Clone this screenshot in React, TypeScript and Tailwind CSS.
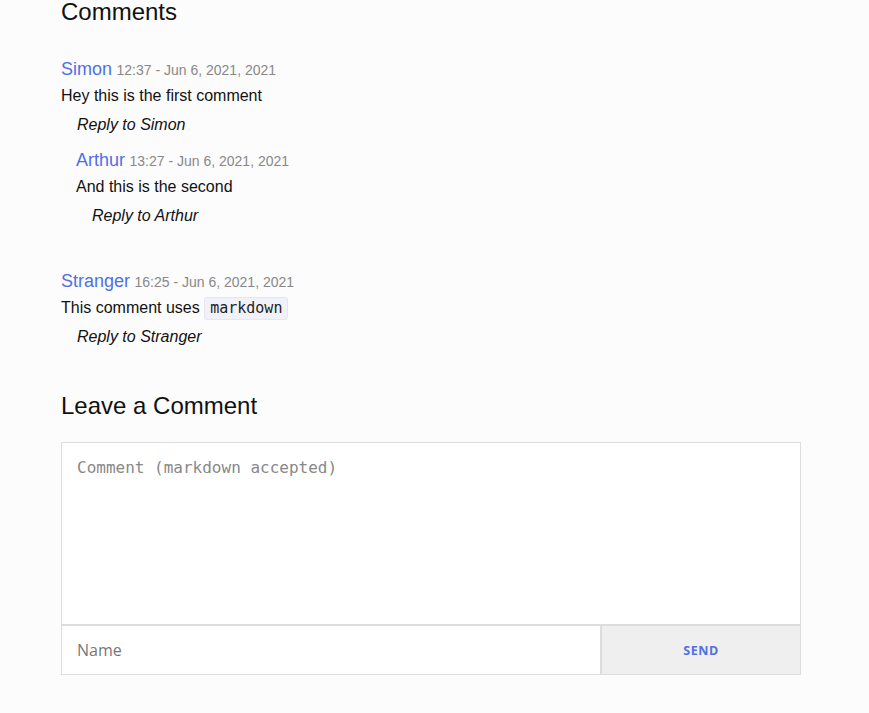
import React from 'react';

type Comment = {
  author: string;
  time: string;
  body: React.ReactNode;
  replies?: Comment[];
};

const comments: Comment[] = [
  {
    author: 'Simon',
    time: '12:37 - Jun 6, 2021, 2021',
    body: 'Hey this is the first comment',
    replies: [
      {
        author: 'Arthur',
        time: '13:27 - Jun 6, 2021, 2021',
        body: 'And this is the second',
      },
    ],
  },
  {
    author: 'Stranger',
    time: '16:25 - Jun 6, 2021, 2021',
    body: (
      <>
        This comment uses{' '}
        <code className="inline-block rounded-[3px] border border-[#e6e6f2] bg-[#f1f1fa] px-[5px] font-['DejaVu_Sans_Mono',monospace] text-[15px] leading-[21px] text-[#222]">
          markdown
        </code>
      </>
    ),
  },
];

function CommentItem({ comment }: { comment: Comment }) {
  return (
    <div>
      <div className="h-[27px] leading-[24px]">
        <span className="text-[18px] text-[#4f70e6]">{comment.author}</span>{' '}
        <span className="text-[14px] text-[#888]">{comment.time}</span>
      </div>
      <p className="text-[16px] leading-[24px] text-[#111]">{comment.body}</p>
      <div className="mt-[5px] pl-4 text-[16px] italic leading-[24px] text-[#111]">
        Reply to {comment.author}
      </div>
      {comment.replies && (
        <div className="mt-[11px] pl-[15px]">
          {comment.replies.map((r) => (
            <CommentItem key={r.author} comment={r} />
          ))}
        </div>
      )}
    </div>
  );
}

export default function App() {
  return (
    <div className="min-h-[713px] bg-[#fcfcfc] font-['Liberation_Sans',Arial,sans-serif]">
      <div className="ml-[61px] w-[740px]">
        <h2 className="text-[24px] leading-none text-[#111]">Comments</h2>

        <div className="mt-[33px] flex flex-col gap-[41px]">
          {comments.map((c) => (
            <CommentItem key={c.author} comment={c} />
          ))}
        </div>

        <h2 className="mt-[45px] text-[24px] leading-none text-[#111]">Leave a Comment</h2>

        <div className="mt-[24px] border border-[#dddddd] bg-white">
          <textarea
            placeholder="Comment (markdown accepted)"
            className="block h-[181px] w-full resize-none bg-white px-[15px] py-[13px] font-['DejaVu_Sans_Mono',monospace] text-[16px] leading-[24px] text-[#222] outline-none placeholder:text-[#888]"
          />
          <div className="flex h-[50px] border-t-2 border-[#dddddd]">
            <input
              placeholder="Name"
              className="min-w-0 flex-1 bg-white px-[15px] font-['Open_Sans',sans-serif] text-[16px] text-[#222] outline-none placeholder:text-[#777]"
            />
            <button className="w-[200px] border-l-2 border-[#dddddd] bg-[#efefef] pt-[2px] font-['Open_Sans',sans-serif] text-[12.5px] font-bold tracking-[0.6px] text-[#4f70e6]">
              SEND
            </button>
          </div>
        </div>
      </div>
    </div>
  );
}
